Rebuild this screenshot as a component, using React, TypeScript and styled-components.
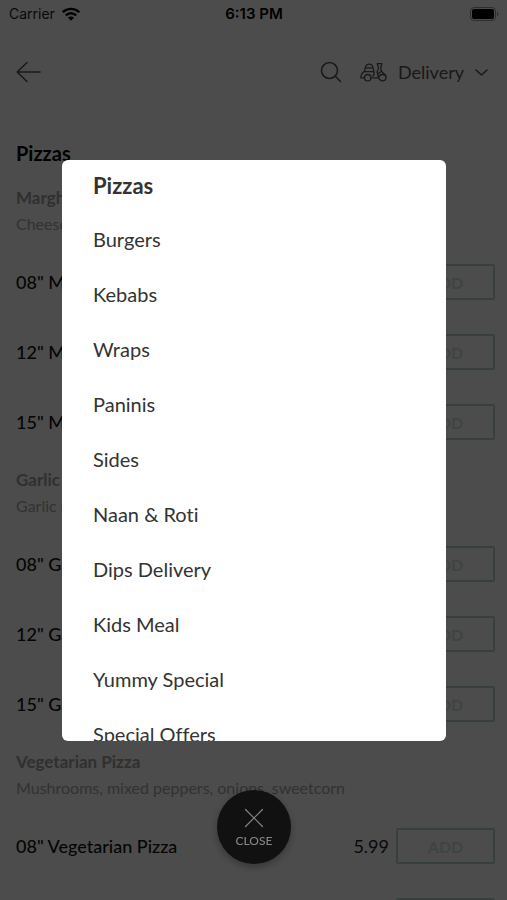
import React from "react";
import styled, { createGlobalStyle } from "styled-components";

const GlobalStyle = createGlobalStyle`
  *, *::before, *::after { box-sizing: border-box; }
  body { margin: 0; background: #fff; font-family: Lato, "Open Sans", sans-serif; font-variant-ligatures: none; }
  button { font-family: inherit; font-variant-ligatures: inherit; cursor: pointer; }
  h1, h2, h3, p, ul { margin: 0; padding: 0; }
`;

const Screen = styled.div`
  height: 100vh;
  overflow: hidden;
`;

const StatusBar = styled.div`
  display: grid;
  grid-template-columns: 1fr auto 1fr;
  align-items: center;
  height: 28px;
  padding: 0 8px 0 9px;
  font: 400 14px/28px Inter, sans-serif;
  color: #222;
`;

const Carrier = styled.div`
  display: flex;
  align-items: center;
  gap: 7px;
`;

const Clock = styled.time`
  font-size: 15px;
  font-weight: 600;
  color: #000;
`;

const BatteryIcon = styled.svg`
  justify-self: end;
`;

const Header = styled.header`
  display: flex;
  align-items: center;
  justify-content: space-between;
  height: 88px;
  padding: 0 19px 0 16px;
  color: #555;
`;

const HeaderActions = styled.div`
  display: flex;
  align-items: center;
  gap: 18px;
`;

const PlainButton = styled.button`
  display: flex;
  align-items: center;
  gap: 11px;
  padding: 0;
  border: 0;
  background: none;
  color: inherit;
  font-size: 18px;
  line-height: 28px;
`;

const Menu = styled.main`
  padding: 24px 12px 0 16px;
`;

const SectionTitle = styled.h1`
  padding-bottom: 18px;
  font-size: 20px;
  line-height: 27px;
  font-weight: 700;
  color: #000;
`;

const Group = styled.section`
  padding-bottom: 10px;
`;

const GroupTitle = styled.h2`
  font-size: 17px;
  line-height: 26px;
  font-weight: 700;
  color: #a0a0a0;
`;

const Description = styled.p`
  margin-bottom: 10px;
  font-size: 16px;
  line-height: 26px;
  color: #a8a8a8;
`;

const OptionRow = styled.div`
  display: flex;
  align-items: center;
  height: 70px;
  gap: 7px;
  font-size: 18px;
  color: #222;
`;

const OptionName = styled.h3`
  flex: 1;
  font-size: 18px;
  font-weight: 500;
  color: #111;
`;

const AddButton = styled.button`
  width: 99px;
  height: 36px;
  border: 2px solid #bcd8cc;
  border-radius: 2px;
  background: transparent;
  color: #d4e2da;
  font-size: 16px;
  font-weight: 700;
`;

const Overlay = styled.div`
  position: fixed;
  inset: 0;
  display: flex;
  flex-direction: column;
  align-items: center;
  gap: 49px;
  padding: 160px 61px 36px 62px;
  background: rgba(0, 0, 0, 0.7);
`;

const Dialog = styled.nav`
  flex: 1;
  min-height: 0;
  width: 100%;
  overflow-y: auto;
  scrollbar-width: none;
  border-radius: 6px;
  background: #fff;
`;

const CategoryList = styled.ul`
  list-style: none;
`;

const CategoryButton = styled.button<{ $active: boolean }>`
  display: block;
  width: 100%;
  height: ${(p) => (p.$active ? 51 : 55)}px;
  padding: 0 31px;
  border: 0;
  background: none;
  text-align: left;
  font-size: ${(p) => (p.$active ? 22 : 20)}px;
  font-weight: ${(p) => (p.$active ? 700 : 400)};
  color: #333;
`;

const CloseButton = styled.button`
  display: flex;
  flex-direction: column;
  align-items: center;
  justify-content: center;
  gap: 5px;
  width: 74px;
  height: 74px;
  padding: 2px 0 0;
  border: 0;
  border-radius: 50%;
  background: #111;
  box-shadow: 0 3px 8px rgba(0, 0, 0, 0.3);
  color: #858585;
  font-size: 12px;
  font-weight: 500;
  line-height: 16px;
`;

const categories = [
  "Pizzas", "Burgers", "Kebabs", "Wraps", "Paninis", "Sides",
  "Naan & Roti", "Dips Delivery", "Kids Meal", "Yummy Special", "Special Offers",
];

const pizzas = [
  { name: "Margherita", description: "Cheese & tomato" },
  { name: "Garlic Pizza", description: "Garlic sauce & cheese" },
  { name: "Vegetarian Pizza", description: "Mushrooms, mixed peppers, onions, sweetcorn" },
];

const sizes = [
  { label: '08"', price: "5.99" },
  { label: '12"', price: "8.99" },
  { label: '15"', price: "11.99" },
];

const Wifi = () => (
  <svg width="18" height="14" viewBox="0 0 18 14" fill="none" stroke="#000" strokeWidth="2.4" aria-hidden="true">
    <path d="M.8 5.2C5.3.7 12.7.7 17.2 5.2" />
    <path d="M3.8 8.4c3-2.9 7.4-2.9 10.4 0" />
    <path d="M6 10.7c1.8-1.6 4.2-1.6 6 0l-3 3z" fill="#000" stroke="none" />
  </svg>
);

const Battery = () => (
  <BatteryIcon width="29" height="14" viewBox="0 0 29 14" aria-hidden="true">
    <rect x=".5" y=".5" width="25" height="13" rx="3.5" fill="none" stroke="#999" />
    <rect x="2" y="2" width="22" height="10" rx="2" fill="#000" />
    <path d="M27 5c2 .5 2 3.5 0 4z" fill="#999" />
  </BatteryIcon>
);

const BackArrow = () => (
  <svg width="25" height="22" viewBox="0 0 25 22" fill="none" stroke="currentColor" strokeWidth="1.6" strokeLinecap="round" strokeLinejoin="round" aria-hidden="true">
    <path d="M11 1.5 1.2 11 11 20.5M1.2 11H24" />
  </svg>
);

const Search = () => (
  <svg width="22" height="22" viewBox="0 0 22 22" fill="none" stroke="currentColor" strokeWidth="1.6" strokeLinecap="round" aria-hidden="true">
    <circle cx="9.5" cy="9.5" r="8" />
    <path d="m15.5 15.5 5 5" />
  </svg>
);

const Scooter = () => (
  <svg width="27" height="20" viewBox="0 0 27 20" fill="none" stroke="currentColor" strokeWidth="1.3" strokeLinecap="round" strokeLinejoin="round" aria-hidden="true">
    <path d="M4.4 9.6 5.400 5.500Q6 2.200 9.200 2.200T13 5.500l.8 4.100M5.300 5.800H13" />
    <path d="M4 9.600h9.800q1 3-1 4.400M4 9.600Q.9 12 .8 15.800h3.500" />
    <path d="M11 15.800h7.300q-.2-3.500-1.300-5.500L18.600 6l-1.400-4.300h4.600L20.800 6l.5 3.200 4.400 4.300" />
    <circle cx="7.700" cy="15.700" r="3.200" />
    <path d="M18.300 15.800q1-3.600 5-3.300 3 .5 2.800 3.600-.8 2.800-3.600 2.800-2.800-.2-3.600-3" />
    <path d="M18 11.500q1.500 0 3.300-2.300" />
  </svg>
);

const ChevronDown = () => (
  <svg width="13" height="10" viewBox="0 0 13 10" fill="none" stroke="currentColor" strokeWidth="1.6" strokeLinecap="round" strokeLinejoin="round" aria-hidden="true">
    <path d="m1 3 5.5 5L12 3" />
  </svg>
);

const Cross = () => (
  <svg width="20" height="20" viewBox="0 0 20 20" stroke="currentColor" strokeWidth="1.2" strokeLinecap="round" aria-hidden="true">
    <path d="m1.5 1.5 17 17M18.5 1.5l-17 17" />
  </svg>
);

export default function App() {
  return (
    <>
      <GlobalStyle />
      <Screen>
        <StatusBar>
          <Carrier>Carrier <Wifi /></Carrier>
          <Clock>6:13 PM</Clock>
          <Battery />
        </StatusBar>
        <Header>
          <PlainButton aria-label="Back"><BackArrow /></PlainButton>
          <HeaderActions>
            <PlainButton aria-label="Search"><Search /></PlainButton>
            <PlainButton>
              <Scooter />
              Delivery
              <ChevronDown />
            </PlainButton>
          </HeaderActions>
        </Header>
        <Menu>
          <SectionTitle>Pizzas</SectionTitle>
          {pizzas.map((pizza) => (
            <Group key={pizza.name}>
              <GroupTitle>{pizza.name}</GroupTitle>
              <Description>{pizza.description}</Description>
              {sizes.map((size) => (
                <OptionRow key={size.label}>
                  <OptionName>{size.label} {pizza.name}</OptionName>
                  <span>{size.price}</span>
                  <AddButton aria-label={`Add ${size.label} ${pizza.name}`}>ADD</AddButton>
                </OptionRow>
              ))}
            </Group>
          ))}
        </Menu>
      </Screen>
      <Overlay>
        <Dialog aria-label="Menu categories">
          <CategoryList>
            {categories.map((category, index) => (
              <li key={category}>
                <CategoryButton $active={index === 0}>{category}</CategoryButton>
              </li>
            ))}
          </CategoryList>
        </Dialog>
        <CloseButton>
          <Cross />
          CLOSE
        </CloseButton>
      </Overlay>
    </>
  );
}
